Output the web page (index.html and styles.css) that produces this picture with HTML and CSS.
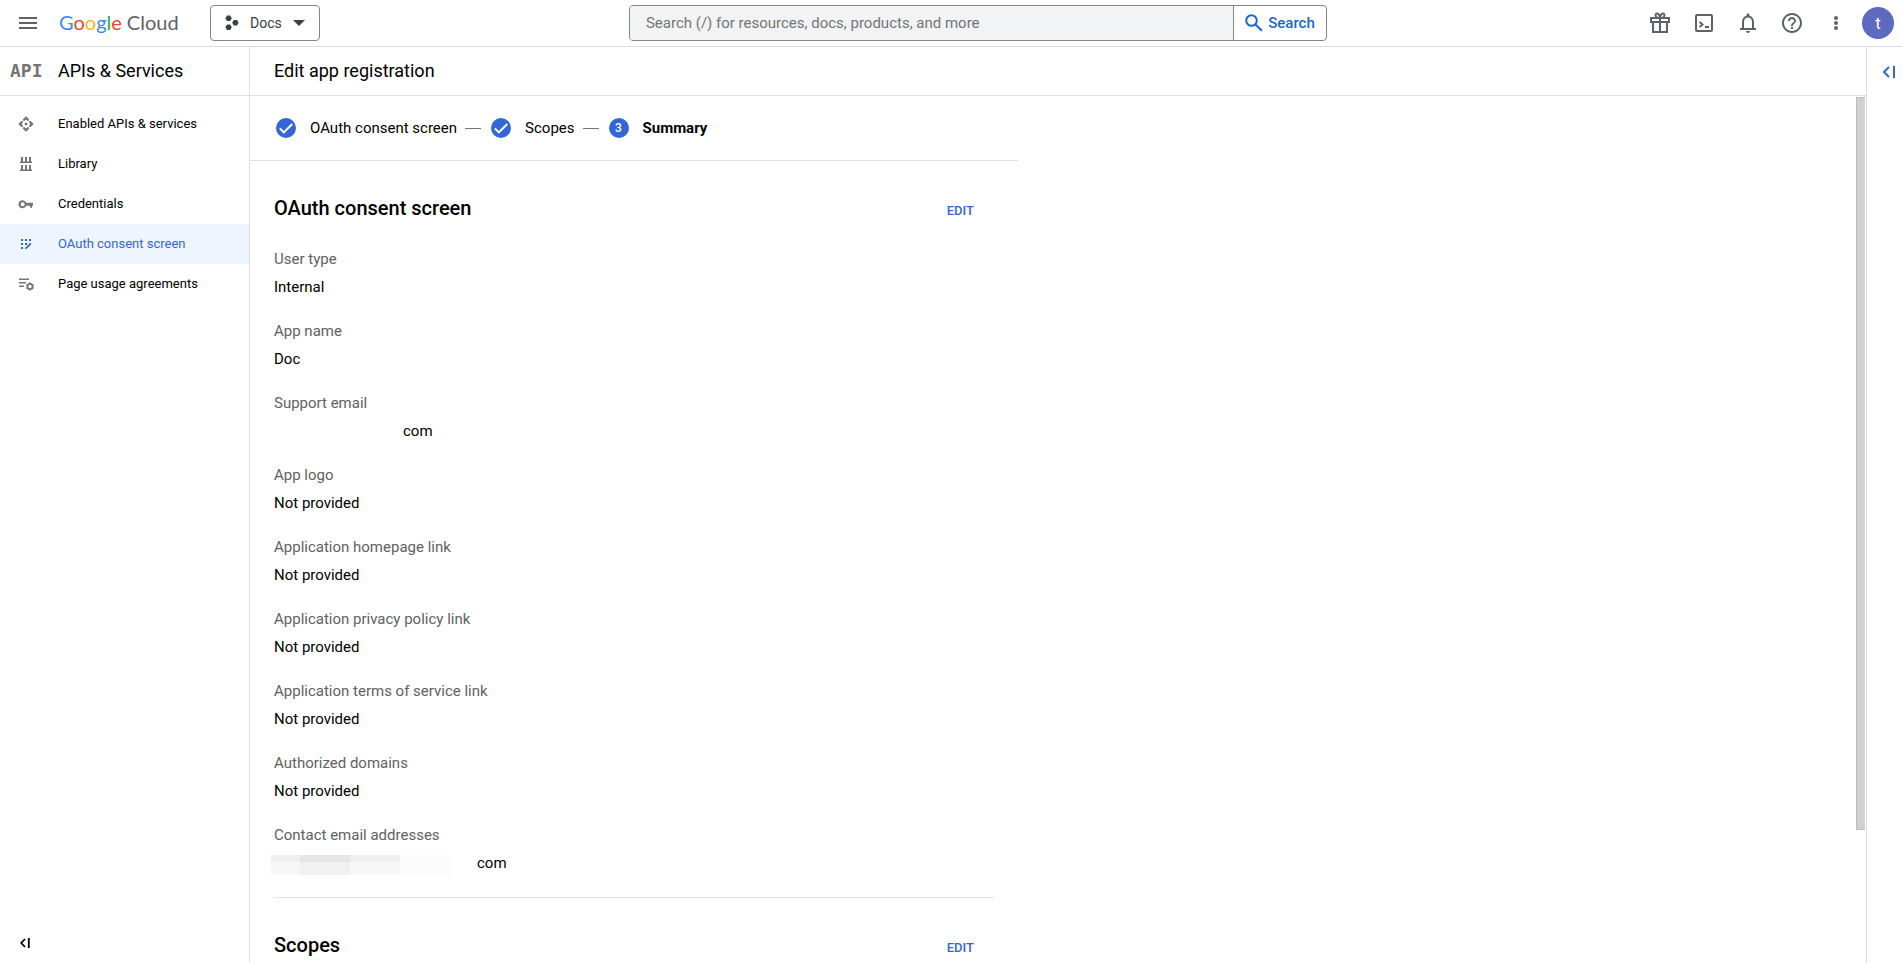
FILE: index.html
```html
<!DOCTYPE html>
<html lang="en">
<head>
<meta charset="utf-8">
<title>Edit app registration – APIs &amp; Services</title>
<link rel="stylesheet" href="styles.css">
</head>
<body>
<header class="topbar">
  <div class="topbar-start">
    <button class="icon-btn menu-btn" aria-label="Main menu"><svg width="18" height="12" viewBox="0 0 18 12" fill="currentColor"><path d="M0 0h18v2H0zM0 5h18v2H0zM0 10h18v2H0z"/></svg></button>
    <a class="logo" href="#" aria-label="Google Cloud"><span><span class="g-blue">G</span><span class="g-red">o</span><span class="g-yellow">o</span><span class="g-blue">g</span><span class="g-green">l</span><span class="g-red">e</span></span><span>Cloud</span></a>
    <button class="project-btn"><svg width="14" height="16" viewBox="0 0 14 16" fill="currentColor"><path d="M2 .5h3.200L6.800 3.200 5.200 6H2L.4 3.200zM2 9.500h3.200l1.600 2.800-1.600 2.700H2L.4 12.300zM8.800 5h3.200l1.600 2.800-1.600 2.700H8.800L7.200 7.800z"/></svg><span>Docs</span><svg width="12" height="6" viewBox="0 0 12 6" fill="currentColor"><path d="M0 0h12L6 6z"/></svg></button>
  </div>
  <form class="search" role="search">
    <input class="search-input" type="text" aria-label="Search" placeholder="Search (/) for resources, docs, products, and more">
    <button class="search-btn" type="button"><svg width="18" height="18" viewBox="0 0 18 18" fill="none" stroke="currentColor" stroke-width="2"><circle cx="6.500" cy="6.500" r="5.300"/><path d="M10.500 10.500l6.300 6.300"/></svg>Search</button>
  </form>
  <div class="topbar-end">
    <button class="icon-btn" aria-label="Free trial"><svg width="20" height="22" viewBox="0 0 20 22" fill="none" stroke="currentColor" stroke-width="2"><path d="M1 6h18v4H1zM3 10v10h14V10M10 6v14M10 5C9 1 5.500.5 5.500 3c0 1.500 1 2.500 2 3M10 5c1-4 4.500-4.500 4.500-2 0 1.500-1 2.500-2 3"/></svg></button>
    <button class="icon-btn" aria-label="Activate Cloud Shell"><svg width="18" height="18" viewBox="0 0 18 18" fill="none" stroke="currentColor" stroke-width="2"><rect x="1" y="1" width="16" height="16" rx="1"/><path d="M4.500 8l3 2.500-3 2.500M10 13h4"/></svg></button>
    <button class="icon-btn" aria-label="Notifications"><svg width="24" height="24" viewBox="0 0 24 24" fill="currentColor"><path d="M18 17v-6c0-3.070-1.630-5.640-4.500-6.320V4c0-.83-.67-1.500-1.500-1.500S10.500 3.170 10.500 4v.68C7.640 5.360 6 7.920 6 11v6H4v2h16v-2zM16 17H8v-6c0-2.480 1.510-4.500 4-4.500s4 2.020 4 4.500zM12 22c1.100 0 2-.9 2-2h-4c0 1.100.9 2 2 2z"/></svg></button>
    <button class="icon-btn" aria-label="Help"><svg width="24" height="24" viewBox="0 0 24 24" fill="currentColor"><path d="M11 18h2v-2h-2v2zm1-16C6.480 2 2 6.480 2 12s4.480 10 10 10 10-4.480 10-10S17.520 2 12 2zm0 18c-4.410 0-8-3.590-8-8s3.590-8 8-8 8 3.590 8 8-3.590 8-8 8zm0-14c-2.210 0-4 1.790-4 4h2c0-1.100.9-2 2-2s2 .9 2 2c0 2-3 1.750-3 5h2c0-2.250 3-2.500 3-5 0-2.210-1.790-4-4-4z"/></svg></button>
    <button class="icon-btn" aria-label="More options"><svg width="4" height="14" viewBox="0 0 4 14" fill="currentColor"><circle cx="2" cy="2" r="2"/><circle cx="2" cy="7" r="2"/><circle cx="2" cy="12" r="2"/></svg></button>
    <button class="avatar" aria-label="Account">t</button>
  </div>
</header>

<div class="shell">
  <nav class="sidebar" aria-label="APIs &amp; Services">
    <div class="product"><span class="product-mark" aria-hidden="true">API</span><span>APIs &amp; Services</span></div>
    <ul class="nav-list">
      <li><a class="nav-item" href="#"><svg width="16" height="16" viewBox="0 0 16 16" fill="currentColor"><path d="M8 .3l3 3v1.200L9.700 5 8 3.600 6.300 5 5 4.500V3.300zM8 15.700l3-3v-1.200L9.700 11 8 12.400 6.300 11l-1.300.5v1.200zM.3 8l3-3h1.200L5 6.300 3.600 8 5 9.700 4.500 11H3.300zM15.700 8l-3-3h-1.200L11 6.300 12.400 8 11 9.700l.5 1.300h1.200z"/><circle cx="8" cy="8" r="1.400"/></svg><span>Enabled APIs &amp; services</span></a></li>
      <li><a class="nav-item" href="#"><svg width="16" height="16" viewBox="0 0 16 16" fill="currentColor"><path d="M3 1h2v5H3zM7 1h2v5H7zM11 1h2v5h-2zM2 5.500h12V7H2zM3 9h2v5H3zM7 9h2v5H7zM11 9h2v5h-2zM2 13.500h12V15H2z"/></svg><span>Library</span></a></li>
      <li><a class="nav-item" href="#"><svg width="16" height="16" viewBox="0 0 16 16" fill="currentColor"><path d="M8.200 6.800A4 4 0 1 0 8.200 9.700H10v0h2v2h2v-2h1V6.800zM4.700 10.200a2 2 0 1 1 0-4 2 2 0 0 1 0 4z"/></svg><span>Credentials</span></a></li>
      <li><a class="nav-item selected" href="#" aria-current="page"><svg width="16" height="16" viewBox="0 0 16 16" fill="currentColor"><path d="M3 3h2v2H3zM7 3h2v2H7zM11 3h2v2h-2zM3 7h2v2H3zM7 7h2v2H7zM3 11h2v2H3zM12.200 6.800l1.300 1.300-4.900 4.900H7.300v-1.300z"/></svg><span>OAuth consent screen</span></a></li>
      <li><a class="nav-item" href="#"><svg width="16" height="16" viewBox="0 0 16 16" fill="none" stroke="currentColor"><path stroke-width="1.500" d="M1 3.200h10M1 6.700h7M1 10.200h5"/><circle cx="12" cy="10.500" r="2.600" stroke-width="1.800"/><path stroke-width="1.800" d="M12 6.500v1.500M12 13v1.500M8.500 8.500l1.300.8M14.200 11.800l1.300.8M8.500 12.500l1.300-.8M14.200 9.200l1.300-.8"/></svg><span>Page usage agreements</span></a></li>
    </ul>
    <button class="collapse-btn" aria-label="Hide navigation menu"><svg width="10" height="10" viewBox="0 0 10 10" fill="none" stroke="currentColor" stroke-width="1.800"><path d="M5 1L1.200 5 5 9M8.800 0v10"/></svg></button>
  </nav>

  <main class="main">
    <h1 class="page-title">Edit app registration</h1>
    <div class="viewport">
      <div class="content">
        <ol class="steps">
          <li class="step"><svg class="step-icon" viewBox="0 0 20 20"><circle cx="10" cy="10" r="10" fill="#3367d6"/><path d="M3.800 10.400l4 4L16.300 6" fill="none" stroke="#fff" stroke-width="2"/></svg><span>OAuth consent screen</span></li>
          <li class="step"><svg class="step-icon" viewBox="0 0 20 20"><circle cx="10" cy="10" r="10" fill="#3367d6"/><path d="M3.800 10.400l4 4L16.300 6" fill="none" stroke="#fff" stroke-width="2"/></svg><span>Scopes</span></li>
          <li class="step current" aria-current="step"><span class="step-icon step-number">3</span><span>Summary</span></li>
        </ol>
        <section class="summary">
          <div class="section-head"><h2>OAuth consent screen</h2><button class="edit-btn">EDIT</button></div>
          <dl class="fields">
            <div><dt>User type</dt><dd>Internal</dd></div>
            <div><dt>App name</dt><dd>Doc</dd></div>
            <div><dt>Support email</dt><dd><span class="hidden-address"></span>com</dd></div>
            <div><dt>App logo</dt><dd>Not provided</dd></div>
            <div><dt>Application homepage link</dt><dd>Not provided</dd></div>
            <div><dt>Application privacy policy link</dt><dd>Not provided</dd></div>
            <div><dt>Application terms of service link</dt><dd>Not provided</dd></div>
            <div><dt>Authorized domains</dt><dd>Not provided</dd></div>
            <div><dt>Contact email addresses</dt><dd><span class="masked-address"><i></i><i></i><i></i><i></i></span>com</dd></div>
          </dl>
        </section>
        <section class="summary">
          <div class="section-head"><h2>Scopes</h2><button class="edit-btn">EDIT</button></div>
        </section>
      </div>
      <div class="scroll-track"><div class="scroll-thumb"></div></div>
    </div>
  </main>

  <aside class="side-panel">
    <button class="panel-btn" aria-label="Show info panel"><svg width="14" height="14" viewBox="0 0 14 14" fill="none" stroke="currentColor" stroke-width="2"><path d="M7 2L2 7l5 5M12 1v12"/></svg></button>
  </aside>
</div>
</body>
</html>
```
FILE: styles.css
```css
* { box-sizing: border-box; }

body {
  margin: 0;
  height: 100vh;
  display: flex;
  flex-direction: column;
  overflow: hidden;
  background: #fff;
  color: #000;
  font-family: Roboto, "Liberation Sans", sans-serif;
  font-size: 15px;
  line-height: 20px;
}

button, input { font: inherit; color: inherit; }
button { border: 0; padding: 0; background: none; cursor: pointer; }
a { color: inherit; text-decoration: none; }
svg { display: block; flex: none; }
ul, ol, dl, dd, h1, h2 { margin: 0; padding: 0; list-style: none; }

/* Top bar */
.topbar {
  flex: none;
  height: 47px;
  display: grid;
  grid-template-columns: minmax(330px, 35fr) minmax(0, 698px) minmax(280px, 32fr);
  align-items: center;
  border-bottom: 1px solid #dadce0;
  color: #5f6368;
}
.topbar-start, .topbar-end { display: flex; align-items: center; }
.topbar-end { justify-content: flex-end; padding-right: 8px; }
.icon-btn { width: 44px; height: 44px; display: grid; place-items: center; }
.menu-btn { margin-left: 6px; }
.logo {
  display: flex;
  gap: 5px;
  width: 120px;
  padding-bottom: 2px;
  margin: 0 31px 0 9px;
  font-family: Lato, sans-serif;
  font-size: 20px;
  line-height: 24px;
}
.g-blue { color: #4285f4; }
.g-red { color: #ea4335; }
.g-yellow { color: #fbbc04; }
.g-green { color: #34a853; }
.project-btn {
  height: 36px;
  display: flex;
  align-items: center;
  gap: 11px;
  padding: 0 14px;
  border: 1px solid #80868b;
  border-radius: 4px;
  color: #3c4043;
  font-size: 14px;
}
.search {
  height: 36px;
  display: flex;
  border: 1px solid #80868b;
  border-radius: 4px;
  overflow: hidden;
}
.search-input {
  flex: 1;
  min-width: 0;
  padding: 0 16px;
  border: 0;
  background: #f1f3f4;
  outline: 0;
}
.search-input::placeholder { color: #757575; opacity: 1; }
.search-btn {
  width: 93px;
  display: flex;
  align-items: center;
  justify-content: center;
  gap: 5px;
  border-left: 1px solid #80868b;
  color: #1967d2;
  font-weight: 500;
}
.avatar {
  width: 32px;
  height: 32px;
  margin-left: 4px;
  border-radius: 50%;
  background: #5c6bc0;
  color: #fff;
  font-size: 17px;
}

/* Page frame */
.shell { flex: 1; min-height: 0; display: flex; }
.sidebar {
  flex: none;
  width: 250px;
  display: flex;
  flex-direction: column;
  border-right: 1px solid #e0e0e0;
}
.product {
  height: 49px;
  display: flex;
  align-items: center;
  gap: 15px;
  padding-left: 10px;
  border-bottom: 1px solid #e0e0e0;
  font-size: 18px;
}
.product-mark {
  width: 33px;
  color: #757575;
  font-family: "DejaVu Sans Mono", monospace;
  font-size: 18px;
  font-weight: 700;
}
.nav-list { padding-top: 8px; font-size: 13px; }
.nav-item {
  height: 40px;
  display: flex;
  align-items: center;
  gap: 24px;
  padding-left: 18px;
}
.nav-item svg { color: #757575; }
.nav-item.selected, .nav-item.selected svg { color: #3367d6; }
.nav-item.selected { background: #eef5fe; }
.collapse-btn {
  width: 40px;
  height: 40px;
  display: grid;
  place-items: center;
  margin-top: auto;
  margin-left: 5px;
}

.main { flex: 1; min-width: 0; display: flex; flex-direction: column; }
.page-title {
  flex: none;
  height: 49px;
  padding: 14px 24px;
  border-bottom: 1px solid #e0e0e0;
  font-size: 18px;
  font-weight: 400;
}
.viewport { flex: 1; min-height: 0; display: flex; overflow: hidden; }
.content { flex: 1; min-width: 0; }
.scroll-track { flex: none; width: 10px; padding: 1px 1px 0 0; }
.scroll-thumb {
  height: 84.6%;
  background: #d1d1d1;
  border: solid #bdbdbd;
  border-width: 1px 0 1px 1px;
}
.side-panel { flex: none; width: 36px; border-left: 1px solid #dadce0; }
.panel-btn {
  width: 35px;
  height: 49px;
  display: grid;
  place-items: center;
  padding-left: 8px;
  color: #3367d6;
}

/* Stepper */
.steps {
  max-width: 768px;
  height: 65px;
  display: flex;
  align-items: center;
  gap: 8px;
  padding: 0 24px;
  border-bottom: 1px solid #e0e0e0;
}
.step { display: flex; align-items: center; }
.step + .step::before {
  content: "";
  width: 16px;
  height: 1px;
  margin-right: 8px;
  background: #757575;
}
.step-icon { width: 20px; height: 20px; margin: 0 14px 0 2px; }
.step-number {
  border-radius: 50%;
  background: #3367d6;
  color: #fff;
  font-size: 12px;
  font-weight: 500;
  text-align: center;
}
.current { font-weight: 700; }

/* Summary sections */
.summary {
  max-width: 720px;
  margin: 0 24px;
  padding: 33px 0 24px;
  border-bottom: 1px solid #e0e0e0;
}
.section-head {
  display: flex;
  align-items: baseline;
  justify-content: space-between;
  padding: 0 20px 0 0;
}
h2 { font-size: 20px; font-weight: 500; line-height: 28px; }
.edit-btn { color: #3367d6; font-size: 13px; font-weight: 500; }
.fields { display: grid; gap: 24px; padding-top: 27px; }
.fields dt { color: #616161; }
.fields dd { display: flex; align-items: center; height: 20px; margin-top: 8px; }
.hidden-address { width: 129px; }
.masked-address {
  display: flex;
  width: 179px;
  height: 20px;
  margin: 4px 27px 0 -3px;
}
.masked-address i {
  flex: 50;
  border-top: 7px solid #efefef;
  background: #f7f7f7;
}
.masked-address i:nth-child(1) { flex: 29; }
.masked-address i:nth-child(2) { border-color: #e6e6e6; background: #f1f1f1; }
.masked-address i:nth-child(4) { border-color: #fcfcfc; background: #fcfcfc; }
```
